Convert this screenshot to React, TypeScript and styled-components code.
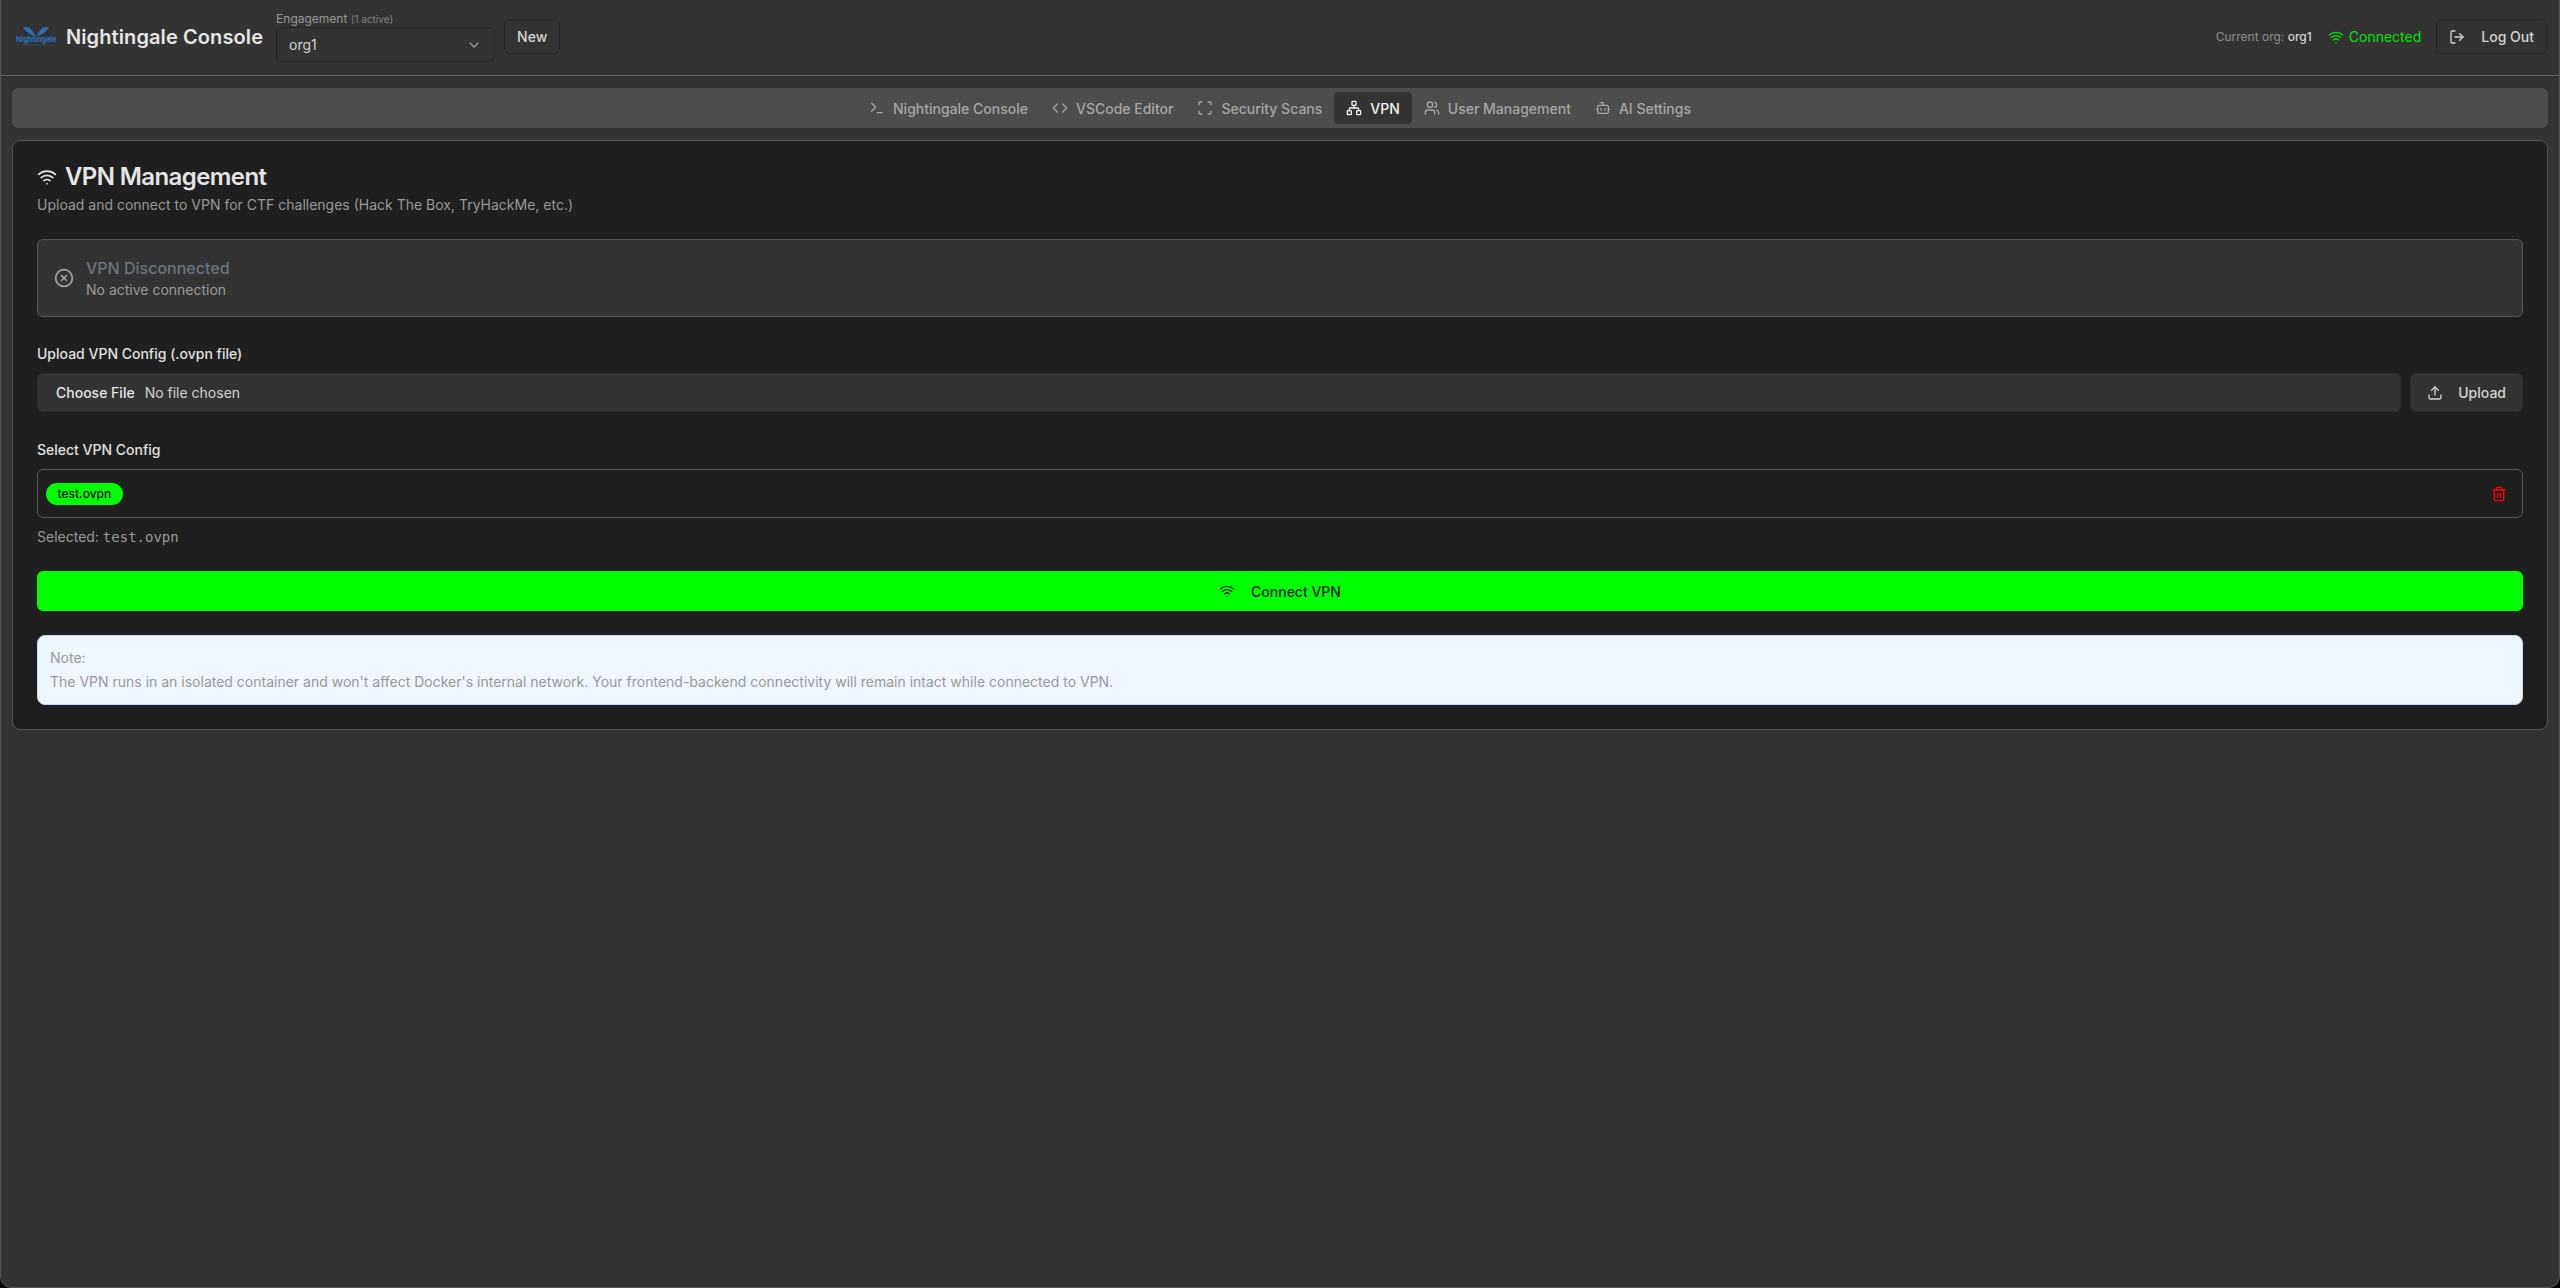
import styled, { createGlobalStyle } from "styled-components";
import {
  Bot,
  ChevronDown,
  CircleX,
  Code,
  LogOut,
  Network,
  Scan,
  Terminal,
  Trash2,
  Upload,
  Users,
  Wifi,
} from "lucide-react";

const GlobalStyle = createGlobalStyle`
  html, body {
    margin: 0;
    padding: 0;
    background: #000;
  }
  body {
    font-family: Inter, "Liberation Sans", sans-serif;
    color: #e5e5e5;
  }
  * {
    box-sizing: border-box;
  }
`;

const Screen = styled.div`
  height: 1288px;
  background: #333333;
  border: 1px solid #555555;
  border-top: none;
  border-radius: 0 0 12px 12px;
  overflow: hidden;
`;

const Header = styled.header`
  height: 76px;
  padding: 0 12px 2px 15px;
  display: flex;
  align-items: center;
  justify-content: space-between;
  border-bottom: 1px solid #666666;
`;

const HeaderGroup = styled.div`
  display: flex;
  align-items: center;
`;

const Logo = styled.div`
  width: 40px;
  display: flex;
  flex-direction: column;
  align-items: center;
  color: #2a70b8;
`;

const LogoWord = styled.span`
  font-size: 7.5px;
  line-height: 7px;
  font-weight: 700;
  letter-spacing: -0.15px;
`;

const LogoTag = styled.span`
  margin-top: 1px;
  font-size: 2px;
  line-height: 3px;
  white-space: nowrap;
  opacity: 0.6;
`;

const Title = styled.h1`
  margin: 0 13px 0 10px;
  font-size: 20px;
  line-height: 28px;
  font-weight: 600;
  letter-spacing: 0.1px;
  color: #e5e5e5;
  white-space: nowrap;
`;

const EngagementField = styled.div`
  width: 219px;
  margin-right: 9px;
`;

const FieldCaption = styled.div`
  font-size: 12px;
  line-height: 16px;
  color: #999999;
`;

const CaptionNote = styled.span`
  font-size: 10px;
  color: #808080;
`;

const Select = styled.div`
  height: 35px;
  padding: 0 12px;
  display: flex;
  align-items: center;
  justify-content: space-between;
  font-size: 14px;
  color: #d4d4d4;
  background: #333333;
  border: 1px solid #262626;
  border-radius: 6px;

  svg {
    color: #999999;
  }
`;

const OutlineButton = styled.button`
  height: 35px;
  padding: 0 12px;
  display: inline-flex;
  align-items: center;
  gap: 16px;
  font-family: inherit;
  font-size: 14px;
  font-weight: 500;
  color: #d4d4d4;
  background: #333333;
  border: 1px solid #262626;
  border-radius: 6px;
`;

const CurrentOrg = styled.span`
  font-size: 12px;
  color: #8c8c8c;
  margin-right: 16px;
`;

const OrgName = styled.span`
  font-weight: 500;
  color: #d4d4d4;
`;

const ConnectionState = styled.span`
  display: inline-flex;
  align-items: center;
  gap: 5px;
  font-size: 14px;
  color: #00e600;
  margin-right: 15px;
`;

const Main = styled.main`
  padding: 12px 11px;
`;

const TabBar = styled.nav`
  height: 40px;
  margin-bottom: 12px;
  display: flex;
  align-items: center;
  justify-content: center;
  background: #4d4d4d;
  border-radius: 6px;
`;

const Tab = styled.div<{ $active?: boolean }>`
  height: 32px;
  padding: 0 12px;
  display: flex;
  align-items: center;
  gap: 8px;
  font-size: 14px;
  font-weight: 500;
  white-space: nowrap;
  border-radius: 4px;
  color: ${(p) => (p.$active ? "#f2f2f2" : "#a6a6a6")};
  background: ${(p) => (p.$active ? "#333333" : "transparent")};
`;

const Card = styled.section`
  padding: 22px 24px 24px;
  background: #1f1f1f;
  border: 1px solid #555555;
  border-radius: 8px;
`;

const CardTitle = styled.h2`
  margin: 0;
  display: flex;
  align-items: center;
  gap: 8px;
  font-size: 24px;
  line-height: 28px;
  font-weight: 600;
  letter-spacing: -0.6px;
  color: #e5e5e5;
`;

const CardSubtitle = styled.p`
  margin: 4px 0 0;
  font-size: 14px;
  line-height: 20px;
  color: #999999;
`;

const StatusBox = styled.div`
  height: 78px;
  margin-top: 24px;
  padding: 0 16px;
  display: flex;
  align-items: center;
  gap: 12px;
  background: #333333;
  border: 1px solid #555555;
  border-radius: 6px;

  svg {
    color: #a6a6a6;
  }
`;

const StatusTitle = styled.div`
  font-size: 16px;
  line-height: 24px;
  font-weight: 500;
  color: #6b7280;
`;

const StatusText = styled.div`
  font-size: 14px;
  line-height: 20px;
  color: #999999;
`;

const FieldLabel = styled.label`
  display: block;
  margin-bottom: 9px;
  font-size: 14px;
  line-height: 20px;
  font-weight: 500;
  color: #e0e0e0;
`;

const UploadField = styled.div`
  margin-top: 27px;
`;

const UploadRow = styled.div`
  display: flex;
  gap: 9px;
`;

const FileInput = styled.input`
  flex: 1;
  height: 39px;
  padding: 0 12px;
  font-family: inherit;
  font-size: 14px;
  color: #d4d4d4;
  background: #333333;
  border: 1px solid #2e2e2e;
  border-radius: 6px;
  line-height: 37px;

  &::file-selector-button {
    height: 37px;
    margin-right: 4px;
    padding: 0 6px;
    font-family: inherit;
    font-size: 14px;
    font-weight: 500;
    color: #e5e5e5;
    background: transparent;
    border: none;
  }
`;

const UploadButton = styled.button`
  width: 113px;
  height: 39px;
  padding: 0 16px;
  display: flex;
  align-items: center;
  justify-content: space-between;
  font-family: inherit;
  font-size: 14px;
  font-weight: 500;
  color: #d4d4d4;
  background: #333333;
  border: 1px solid #2e2e2e;
  border-radius: 6px;
`;

const SelectField = styled.div`
  margin-top: 28px;
`;

const ConfigList = styled.div`
  height: 49px;
  padding: 0 15px 0 8px;
  display: flex;
  align-items: center;
  justify-content: space-between;
  border: 1px solid #555555;
  border-radius: 6px;

  svg {
    color: #ff0000;
  }
`;

const ConfigChip = styled.span`
  height: 22px;
  padding: 0 11.5px;
  display: inline-flex;
  align-items: center;
  font-size: 12px;
  font-weight: 500;
  color: #0a0a0a;
  background: #00ff00;
  border-radius: 11px;
`;

const SelectedLine = styled.div`
  margin-top: 9px;
  font-size: 14px;
  line-height: 20px;
  color: #999999;
`;

const Mono = styled.code`
  font-family: "DejaVu Sans Mono", "Liberation Mono", monospace;
  font-size: 14px;
`;

const ConnectButton = styled.button`
  width: 100%;
  height: 40px;
  margin-top: 24px;
  display: flex;
  align-items: center;
  justify-content: center;
  gap: 16px;
  font-family: inherit;
  font-size: 14px;
  font-weight: 500;
  color: #1f1f1f;
  background: #00ff00;
  border: none;
  border-radius: 6px;
`;

const Note = styled.div`
  height: 70px;
  margin-top: 24px;
  padding: 10px 12px;
  font-size: 14px;
  line-height: 24px;
  color: #999999;
  background: #eff6ff;
  border: 1px solid #bfdbfe;
  border-radius: 8px;
`;

const tabs = [
  { label: "Nightingale Console", icon: Terminal },
  { label: "VSCode Editor", icon: Code },
  { label: "Security Scans", icon: Scan },
  { label: "VPN", icon: Network, active: true },
  { label: "User Management", icon: Users },
  { label: "AI Settings", icon: Bot },
];

const App = () => {
  return (
    <Screen>
      <GlobalStyle />
      <Header>
        <HeaderGroup>
          <Logo>
            <svg width="26" height="9" viewBox="0 0 26 9" fill="#2a70b8">
              <path d="M0 0 L6 0.5 C9 3 11 6 12.3 9 C7 8 2.5 4.5 0 0 Z" />
              <path d="M26 0 L20 0.5 C17 3 15 6 13.7 9 C19 8 23.5 4.5 26 0 Z" />
            </svg>
            <LogoWord>Nightingale</LogoWord>
            <LogoTag>Security Research Tools</LogoTag>
          </Logo>
          <Title>Nightingale Console</Title>
          <EngagementField>
            <FieldCaption>
              Engagement <CaptionNote>(1 active)</CaptionNote>
            </FieldCaption>
            <Select>
              org1
              <ChevronDown size={16} />
            </Select>
          </EngagementField>
          <OutlineButton>New</OutlineButton>
        </HeaderGroup>
        <HeaderGroup>
          <CurrentOrg>
            Current org: <OrgName>org1</OrgName>
          </CurrentOrg>
          <ConnectionState>
            <Wifi size={16} />
            Connected
          </ConnectionState>
          <OutlineButton>
            <LogOut size={16} />
            Log Out
          </OutlineButton>
        </HeaderGroup>
      </Header>
      <Main>
        <TabBar>
          {tabs.map((tab) => (
            <Tab key={tab.label} $active={tab.active}>
              <tab.icon size={16} />
              {tab.label}
            </Tab>
          ))}
        </TabBar>
        <Card>
          <CardTitle>
            <Wifi size={20} />
            VPN Management
          </CardTitle>
          <CardSubtitle>Upload and connect to VPN for CTF challenges (Hack The Box, TryHackMe, etc.)</CardSubtitle>
          <StatusBox>
            <CircleX size={20} />
            <div>
              <StatusTitle>VPN Disconnected</StatusTitle>
              <StatusText>No active connection</StatusText>
            </div>
          </StatusBox>
          <UploadField>
            <FieldLabel>Upload VPN Config (.ovpn file)</FieldLabel>
            <UploadRow>
              <FileInput type="file" />
              <UploadButton>
                <Upload size={16} />
                Upload
              </UploadButton>
            </UploadRow>
          </UploadField>
          <SelectField>
            <FieldLabel>Select VPN Config</FieldLabel>
            <ConfigList>
              <ConfigChip>test.ovpn</ConfigChip>
              <Trash2 size={16} />
            </ConfigList>
            <SelectedLine>
              Selected: <Mono>test.ovpn</Mono>
            </SelectedLine>
          </SelectField>
          <ConnectButton>
            <Wifi size={16} />
            Connect VPN
          </ConnectButton>
          <Note>
            <div>Note:</div>
            <div>
              The VPN runs in an isolated container and won't affect Docker's internal network. Your frontend-backend
              connectivity will remain intact while connected to VPN.
            </div>
          </Note>
        </Card>
      </Main>
    </Screen>
  );
};

export default App;
